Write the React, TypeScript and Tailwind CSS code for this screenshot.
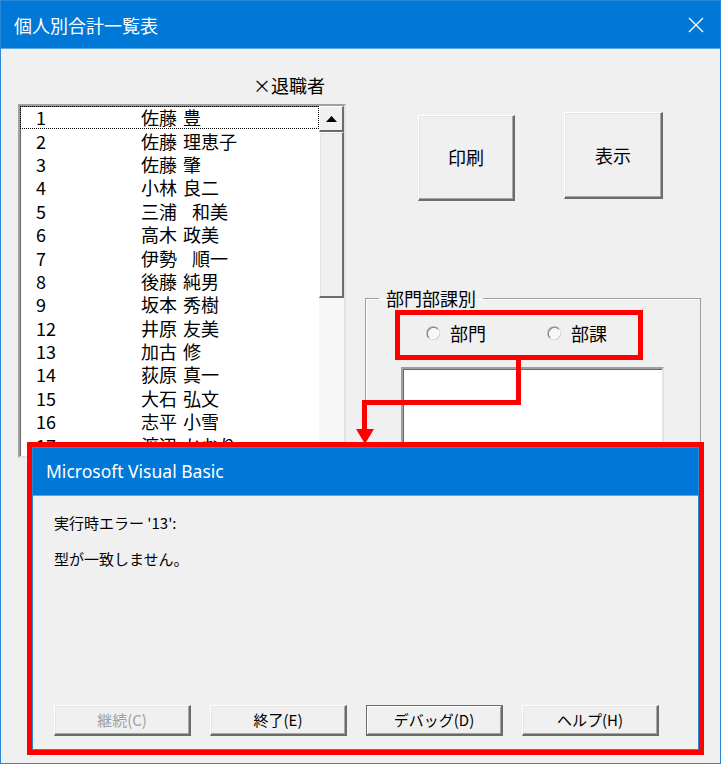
import React from "react";

const JP = "font-['Noto_Sans_CJK_JP',sans-serif]";

const rows: [string, string, string, boolean][] = [
  ["1", "佐藤", "豊", false],
  ["2", "佐藤", "理恵子", false],
  ["3", "佐藤", "肇", false],
  ["4", "小林", "良二", false],
  ["5", "三浦", "和美", true],
  ["6", "高木", "政美", false],
  ["7", "伊勢", "順一", true],
  ["8", "後藤", "純男", false],
  ["9", "坂本", "秀樹", false],
  ["12", "井原", "友美", false],
  ["13", "加古", "修", false],
  ["14", "荻原", "真一", false],
  ["15", "大石", "弘文", false],
  ["16", "志平", "小雪", false],
  ["17", "渡辺", "かおり", false],
];

function Radio({ label }: { label: string }) {
  return (
    <div className="flex items-center">
      <svg width="16" height="16" viewBox="0 0 16 16">
        <circle cx="8" cy="8" r="6.3" fill="#f7f7f7" stroke="#c4c4c4" strokeWidth="1.4" />
        <path d="M3.6 12.4 A6.3 6.3 0 0 1 12.4 3.6" fill="none" stroke="#8a8a8a" strokeWidth="1.3" />
        <path d="M13.2 5 A6.3 6.3 0 0 1 5 13.2" fill="none" stroke="#ffffff" strokeWidth="1.3" />
      </svg>
      <span className="ml-[9px] text-[18px] leading-[22px] text-black">{label}</span>
    </div>
  );
}

function MainButton({ label, cls }: { label: string; cls: string }) {
  return (
    <div
      className={`${cls} flex items-center justify-center bg-[#f0f0f0] border-t border-l border-t-white border-l-white border-r-2 border-b-2 border-r-[#6b6b6b] border-b-[#6b6b6b] shadow-[inset_-1px_-1px_0_#a8a8a8,inset_1px_1px_0_#e6e6e6] text-[18px] text-black`}
    >
      {label}
    </div>
  );
}

function DlgButton({ label, disabled, def }: { label: string; disabled?: boolean; def?: boolean }) {
  return (
    <div
      className={`w-[137px] h-[31px] flex items-center justify-center bg-[#f0f0f0] text-[15px] ${
        disabled ? "text-[#a0a0a0]" : "text-black"
      } ${
        def
          ? "border border-[#6b6b6b] border-r-2 border-b-2 shadow-[inset_1px_1px_0_#ffffff,inset_-1px_-1px_0_#a0a0a0]"
          : "border-t border-l border-t-white border-l-white border-r-2 border-b-2 border-r-[#6b6b6b] border-b-[#6b6b6b] shadow-[inset_-1px_-1px_0_#a8a8a8,inset_1px_1px_0_#e6e6e6]"
      }`}
    >
      {label}
    </div>
  );
}

export default function App() {
  return (
    <div className={`relative w-[722px] h-[765px] bg-white ${JP}`}>
      <div className="w-[721px] h-[764px] border border-[#2a86d6] bg-[#f0f0f0] flex flex-col overflow-hidden">
        {/* title bar */}
        <div className="h-[47px] bg-[#0078d7] flex items-center justify-between pl-[13px] pr-[16px] shrink-0">
          <span className="text-white text-[18px] leading-none">個人別合計一覧表</span>
          <svg width="16" height="16" viewBox="0 0 16 16">
            <path d="M1 1 L15 15 M15 1 L1 15" stroke="#ffffff" strokeWidth="1.3" />
          </svg>
        </div>
        <div className="h-px bg-[#5aa6e6] shrink-0" />

        {/* body */}
        <div className="flex flex-1">
          {/* left column */}
          <div className="w-[345px] pl-[17px] pt-[25px]">
            <div className="pl-[235px] text-[18px] leading-[22px] text-black mb-[8px] whitespace-nowrap">×退職者</div>
            <div className="w-[328px] h-[354px] bg-white border-2 border-t-[#a0a0a0] border-l-[#a0a0a0] border-r-[#e3e3e3] border-b-[#e3e3e3] shadow-[inset_1px_1px_0_#696969] flex overflow-hidden">
              <div className="flex-1 overflow-hidden">
                {rows.map(([n, s, g, wide], i) => (
                  <div
                    key={n}
                    className={`h-[23.4px] flex items-center text-[18px] leading-[23px] text-black ${
                      i === 0 ? "outline-1 outline-dotted outline-black -outline-offset-1" : ""
                    }`}
                  >
                    <span className="pl-[16px] w-[121px]">{n}</span>
                    <span>{s}</span>
                    <span className={wide ? "ml-[15px]" : "ml-[6px]"}>{g}</span>
                  </div>
                ))}
              </div>
              {/* scrollbar */}
              <div className="w-[25px] flex flex-col bg-[#f6f6f6]">
                <div className="h-[26px] flex items-center justify-center bg-[#f0f0f0] border-t border-l border-t-white border-l-white border-r-2 border-b-2 border-r-[#6b6b6b] border-b-[#6b6b6b]">
                  <svg width="11" height="6" viewBox="0 0 11 6">
                    <path d="M0 6 L5.5 0 L11 6 Z" fill="#000" />
                  </svg>
                </div>
                <div className="h-[166px] bg-[#f0f0f0] border-t border-l border-t-white border-l-white border-r-2 border-b-2 border-r-[#6b6b6b] border-b-[#6b6b6b] shadow-[inset_1px_1px_0_#e3e3e3]" />
                <div className="flex-1" />
              </div>
            </div>
          </div>

          {/* right column */}
          <div className="ml-[19px] flex flex-col">
            <div className="flex items-start h-[152px]">
              <MainButton label="印刷" cls="ml-[53px] mt-[66px] w-[97px] h-[86px]" />
              <MainButton label="表示" cls="ml-[49px] mt-[63px] w-[99px] h-[87px]" />
            </div>
            <fieldset className="mt-[86px] w-[336px] h-[400px] border border-[#a0a0a0] shadow-[inset_1px_1px_0_#ffffff]">
              <legend className="ml-[13px] px-[7px] text-[18px] leading-[22px] text-black">部門部課別</legend>
              <div className="flex mt-[13px] pl-[59px]">
                <Radio label="部門" />
                <div className="ml-[60px]">
                  <Radio label="部課" />
                </div>
              </div>
              <div className="ml-[35px] mt-[23px] w-[263px] h-[150px] bg-white border-2 border-t-[#a0a0a0] border-l-[#a0a0a0] border-r-[#e3e3e3] border-b-[#e3e3e3] shadow-[inset_1px_1px_0_#696969]" />
            </fieldset>
          </div>
        </div>
      </div>

      {/* red annotation */}
      <div className="absolute left-[395px] top-[310px] w-[248px] h-[50px] border-[5px] border-[#ff0000]" />
      <div className="absolute left-[516px] top-[358px] w-[5px] h-[47px] bg-[#ff0000]" />
      <div className="absolute left-[362px] top-[400px] w-[159px] h-[5px] bg-[#ff0000]" />
      <div className="absolute left-[362px] top-[400px] w-[5px] h-[31px] bg-[#ff0000]" />
      <svg className="absolute left-[356px] top-[429px]" width="18" height="15" viewBox="0 0 18 15">
        <path d="M0 0 L18 0 L9 15 Z" fill="#ff0000" />
      </svg>

      {/* error dialog */}
      <div className="absolute left-[27px] top-[442px] w-[677px] h-[313px] border-[5px] border-[#ff0000]">
        <div className="w-full h-full border border-[#2a86d6] bg-[#f0f0f0] flex flex-col">
          <div className="h-[47px] bg-[#0078d7] flex items-center pl-[13px] shrink-0">
            <span className="text-white text-[17.5px] leading-none font-['Noto_Sans',sans-serif]">Microsoft Visual Basic</span>
          </div>
          <div className="h-px bg-[#5aa6e6] shrink-0" />
          <div className="flex-1 flex flex-col pl-[21px] pt-[17px] pb-[13px]">
            <div className="text-[15px] leading-[20px] text-black">実行時エラー '13':</div>
            <div className="mt-[16px] text-[15px] leading-[20px] text-black">型が一致しません。</div>
            <div className="mt-auto flex gap-[19px]">
              <DlgButton label="継続(C)" disabled />
              <DlgButton label="終了(E)" />
              <DlgButton label="デバッグ(D)" def />
              <DlgButton label="ヘルプ(H)" />
            </div>
          </div>
        </div>
      </div>
    </div>
  );
}
